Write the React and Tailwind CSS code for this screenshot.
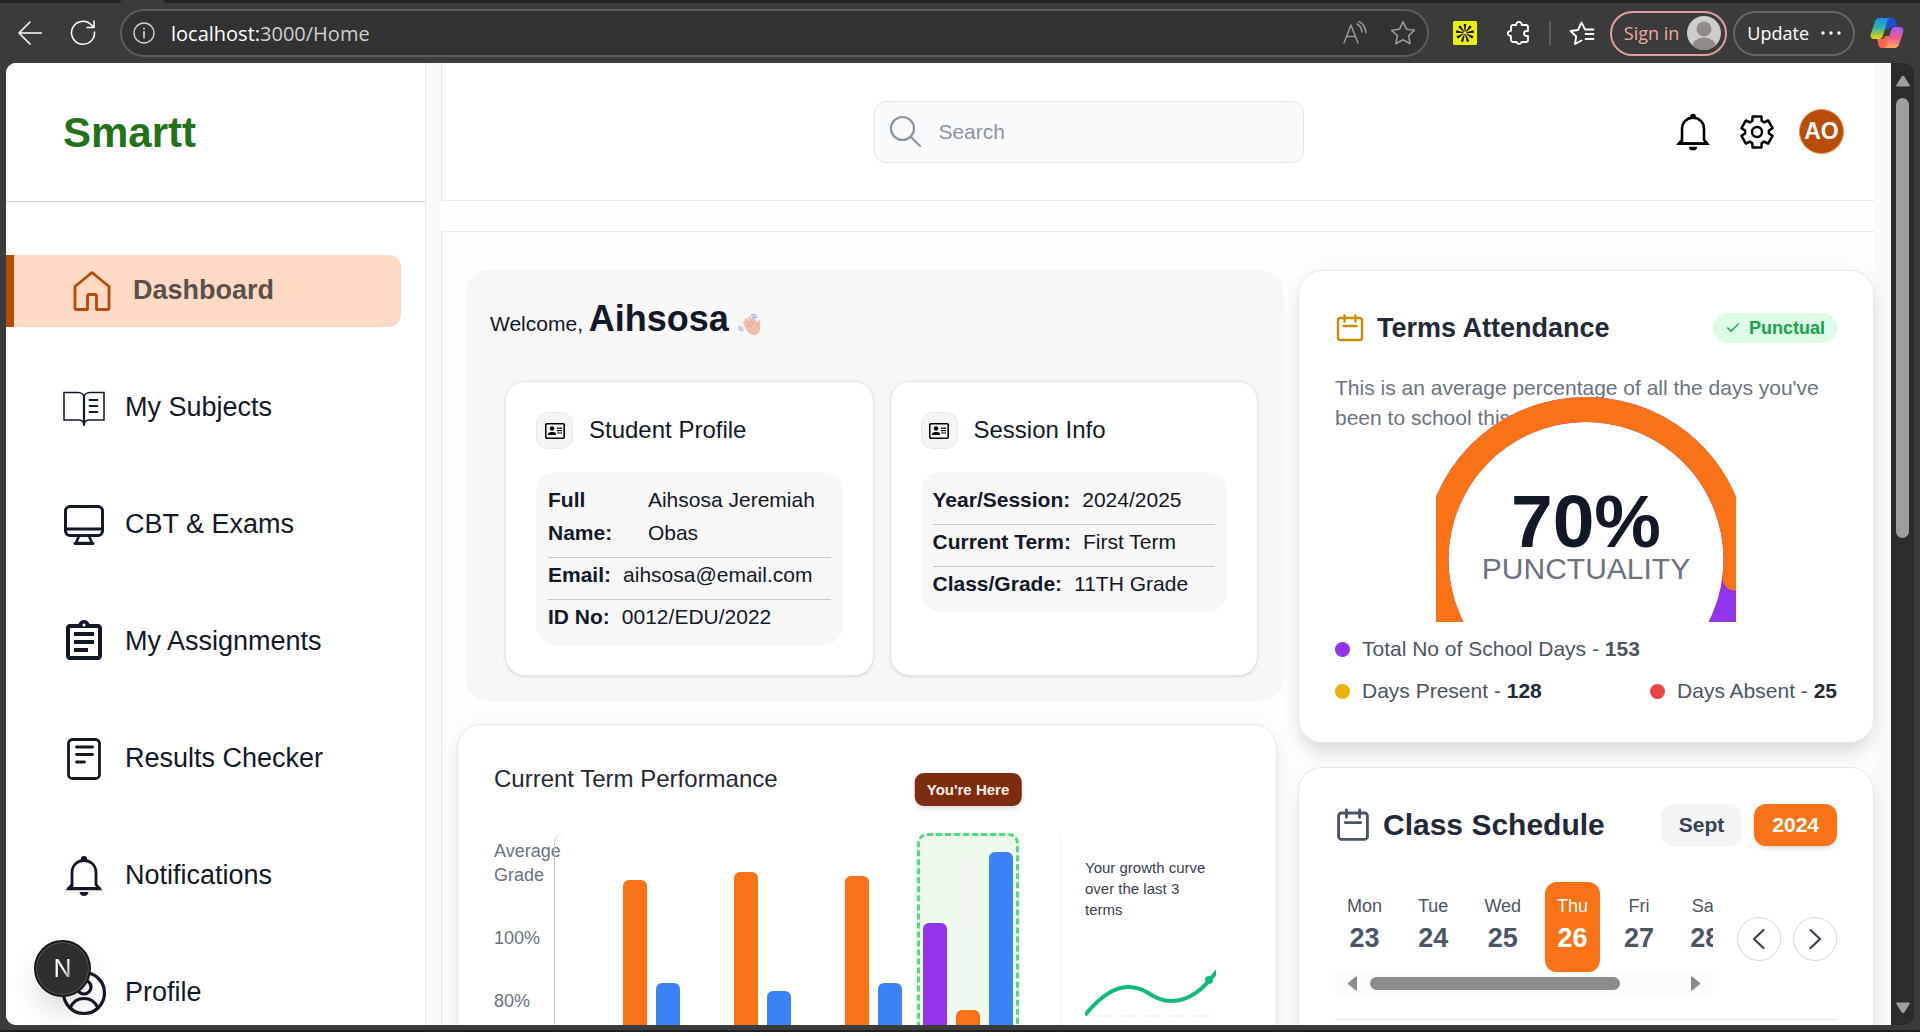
import React from "react";
import { Check } from "lucide-react";

/* ---------- icons ---------- */

const stroke = { fill: "none", stroke: "currentColor", strokeLinecap: "round", strokeLinejoin: "round" };

function HomeIcon() {
  return (
    <svg viewBox="0 0 48 48" className="size-12" {...stroke} strokeWidth="2.8">
      <path d="M24 5.500L41 19.500V41a1.500 1.500 0 0 1-1.500 1.500H28.500V29a1.500 1.500 0 0 0-1.500-1.500h-6a1.500 1.500 0 0 0-1.500 1.500v13.500H8.500A1.500 1.500 0 0 1 7 41V19.500z" />
    </svg>
  );
}

function BookIcon() {
  return (
    <svg viewBox="0 0 48 48" className="size-12" {...stroke} strokeWidth="1.5" strokeLinejoin="miter">
      <path d="M4 8.500h14c3.500 0 6 2 6 5c0-3 2.500-5 6-5h14V36H30c-3.500 0-6 1-6 5c0-4-2.500-5-6-5H4z" />
      <path d="M24 13V41" strokeWidth="2.2" />
      <path d="M29.500 16h8M29.500 22h8M29.500 28h8" strokeWidth="1.800" />
    </svg>
  );
}

function MonitorIcon() {
  return (
    <svg viewBox="0 0 48 48" className="size-12" {...stroke} strokeWidth="3">
      <rect x="5.500" y="5.500" width="37" height="29" rx="4.500" />
      <path d="M6 28h36" strokeWidth="3" />
      <path d="M19 35l-3 7h16L29 35" strokeWidth="2.6" />
      <path d="M15 42.500h18" strokeWidth="2.8" />
    </svg>
  );
}

function AssignmentIcon() {
  return (
    <svg viewBox="0 0 24 24" className="size-12" fill="currentColor">
      <path d="M7 15h7v2H7zm0-4h10v2H7zm0-4h10v2H7zm12-4h-4.180C14.400 1.840 13.300 1 12 1s-2.400.84-2.820 2H5c-.14 0-.27.010-.4.040a2.008 2.008 0 0 0-1.440 1.190c-.1.230-.16.490-.16.770v14c0 .27.060.54.160.78s.25.450.43.640c.27.270.62.470 1.010.550.130.020.260.030.400.030h14c1.100 0 2-.9 2-2V5c0-1.100-.9-2-2-2m-7-.25c.41 0 .75.340.75.750s-.34.750-.75.750-.75-.34-.75-.75.340-.75.750-.75M19 19H5V5h14z" />
    </svg>
  );
}

function ReportIcon() {
  return (
    <svg viewBox="0 0 48 48" className="size-12" {...stroke} strokeWidth="2.8">
      <rect x="8.500" y="4.500" width="31" height="39" rx="4" />
      <path d="M16.500 12h16M16.500 19.500h16M16.500 27h8" strokeWidth="2.8" />
    </svg>
  );
}

function BellIcon({ className = "size-12" }) {
  return (
    <svg viewBox="0 0 48 48" className={className} {...stroke} strokeWidth="2.8">
      <path d="M12 35V20.500C12 13.500 17.200 8.500 24 8.500s12 5 12 12V32.500l3.500 4.300H8.500L12 32.500" strokeLinejoin="miter" strokeLinecap="butt" />
      <path d="M7.500 36.500h33" strokeWidth="2.800" strokeLinecap="butt" />
      <path d="M20.800 9V7.200a3.200 3.200 0 0 1 6.400 0V9z" fill="currentColor" stroke="none" />
      <path d="M19.500 40h9a4.500 4 0 0 1-9 0z" fill="currentColor" stroke="none" />
    </svg>
  );
}

function UserIcon() {
  return (
    <svg viewBox="0 0 48 48" className="size-12" {...stroke} strokeWidth="3.2">
      <circle cx="24" cy="24" r="20.500" />
      <circle cx="24" cy="18" r="7" />
      <path d="M10.500 38.500C13 32.500 18 29.500 24 29.500s11 3 13.500 9" />
    </svg>
  );
}

function GearIcon() {
  const pts = [];
  for (let k = 0; k < 6; k++) {
    const base = -90 + k * 60;
    for (const [da, r] of [[-23, 12], [-16, 16], [16, 16], [23, 12]]) {
      const a = ((base + da) * Math.PI) / 180;
      pts.push(`${(18 + r * Math.cos(a)).toFixed(2)},${(18 + r * Math.sin(a)).toFixed(2)}`);
    }
  }
  return (
    <svg viewBox="0 0 36 36" className="size-9" {...stroke} strokeWidth="2.5">
      <polygon points={pts.join(" ")} />
      <circle cx="18" cy="18" r="5" />
    </svg>
  );
}

function SearchIcon() {
  return (
    <svg viewBox="0 0 36 36" className="size-9 shrink-0 text-[#8b93a3]" {...stroke} strokeWidth="2.2">
      <circle cx="14.500" cy="14.500" r="11.500" />
      <path d="M23 23l9 9" />
    </svg>
  );
}

function CalendarIcon({ className }) {
  return (
    <svg viewBox="0 0 30 30" className={className} {...stroke} strokeWidth="2.4">
      <rect x="3" y="5" width="24" height="22" rx="2.500" />
      <path d="M9.500 2.500v6M20.500 2.500v6M8.500 13h13" />
    </svg>
  );
}

function IdCardIcon() {
  return (
    <svg viewBox="0 0 20 16" className="h-4 w-5" fill="currentColor">
      <rect x="0.800" y="0.800" width="18.400" height="14.400" rx="1" fill="#fff" stroke="currentColor" strokeWidth="1.600" />
      <circle cx="7" cy="5.500" r="2.200" />
      <path d="M3 12v-1c0-1.500 2-2 4-2s4 .5 4 2v1z" />
      <path d="M12 4.500h5v1.300h-5zM12 7h5v1.300h-5zM12 9.500h5v1h-5z" />
    </svg>
  );
}

function WaveIcon() {
  return (
    <svg viewBox="0 0 24 24" className="ml-[9px] inline-block size-6">
      <g fill="none" stroke="#eebda6" strokeLinecap="round">
        <path d="M11 14L6.500 9.500M12.500 11.500L8 6.800M15 10L11.500 5.200M17.500 10.500L15.500 5.800" strokeWidth="3" />
        <path d="M20.500 13.500L20.800 8.500" strokeWidth="2.6" />
      </g>
      <path d="M6 12.500l7-5 6 1 3 4c1 5-1.500 9-5.500 9.500-4 .3-7.500-3.500-10.500-9.500z" fill="#eebda6" />
      <path d="M9.500 9.500l3.500 3.500M12.500 8l2.800 3.500" stroke="#dd9f86" strokeWidth=".7" fill="none" />
      <g fill="none" stroke="#8fb1f5" strokeWidth="1.200" strokeLinecap="round">
        <path d="M13 2.800c1.800-2 5-1 5.600 1.700M14.500 4.500c1-1 2.200-.6 2.600.6" />
        <path d="M1.500 13.500c-1.300 2 .3 4.500 2.800 4.500M3.500 14c-.5 1.200.2 2.200 1.500 2.300" />
      </g>
    </svg>
  );
}

/* ---------- browser frame ---------- */

function CopilotLogo() {
  return (
    <svg viewBox="0 0 34 32" className="h-8 w-[34px]">
      <defs>
        <linearGradient id="cpA" x1="0" y1="0" x2="0" y2="1">
          <stop offset="0" stopColor="#1a8df0" />
          <stop offset=".45" stopColor="#2fb3a8" />
          <stop offset="1" stopColor="#f4d80a" />
        </linearGradient>
        <linearGradient id="cpB" x1="0" y1="0" x2="0" y2="1">
          <stop offset="0" stopColor="#a05cf5" />
          <stop offset=".5" stopColor="#ef5a92" />
          <stop offset="1" stopColor="#ffae57" />
        </linearGradient>
      </defs>
      <path d="M9.500 1h13c1.600 0 2.400 1 2.800 2.400L27 9.500h-4.500c-2 0-3 1-3.600 3l-5 0L16 3z" fill="#1b4fd8" />
      <path d="M24.500 31h-13c-1.600 0-2.400-1-2.800-2.400L7 22h4.500c2 0 3-1 3.600-3h5L18 29z" fill="#f4694a" />
      <path d="M9.500 1H20c-1.500.3-2.300 1.500-2.800 3.200L13 18.500C12.200 21 11 22 9 22H4.500C1.500 22 0 20 .8 17L5 4.500C5.800 2.200 7.300 1 9.500 1z" fill="url(#cpA)" />
      <path d="M24.500 31H14c1.500-.3 2.300-1.500 2.800-3.200L21 13.500c.8-2.500 2-3.500 4-3.500h4.500c3 0 4.500 2 3.700 5L29 27.500c-.8 2.300-2.300 3.500-4.500 3.500z" fill="url(#cpB)" />
    </svg>
  );
}

function StarburstLogo() {
  const rays = [0, 40, 80, 120, 160, 200, 240, 280, 320];
  return (
    <svg viewBox="0 0 24 24" className="size-6">
      <rect width="24" height="24" rx="1.500" fill="#eaf20a" />
      {rays.map((r) => (
        <path key={r} d="M11.600 10.500l-.9-7.500h2.600l-.9 7.500z" fill="#111" transform={`rotate(${r} 12 12)`} />
      ))}
    </svg>
  );
}

function Toolbar() {
  return (
    <header className="flex h-[60px] shrink-0 items-center bg-[#3b3b3b] pr-4 pl-[18px] font-['Open_Sans',sans-serif] text-white">
      <button aria-label="Back" className="mr-7">
        <svg viewBox="0 0 24 24" className="size-6" {...stroke} strokeWidth="1.500">
          <path d="M23.500 12H1M12 1L1 12l11 11" />
        </svg>
      </button>
      <button aria-label="Refresh" className="mr-[24px]">
        <svg viewBox="0 0 26 26" className="size-[26px]" {...stroke} strokeWidth="1.500">
          <path d="M24.500 12a11.500 11.500 0 1 1-3.500-7.500L24 7.500M24 1v6.500h-7" />
        </svg>
      </button>
      <div className="flex h-12 min-w-0 flex-1 items-center rounded-full border-2 border-[#5c5c5c] bg-[#323232] px-[11px]">
        <svg viewBox="0 0 22 22" className="size-[22px] shrink-0 text-[#d0d0d0]" {...stroke} strokeWidth="1.400">
          <circle cx="11" cy="11" r="10" />
          <path d="M11 10v5.500M11 6.500v.2" strokeWidth="1.800" />
        </svg>
        <p className="ml-4 flex-1 truncate pt-[2px] text-[20px]/[30px]">
          localhost:<span className="text-[#cfcfcf]">3000/Home</span>
        </p>
        <button aria-label="Read aloud" className="mr-[22px] text-[#999]">
          <svg viewBox="0 0 26 24" className="h-6 w-[26px]" {...stroke} strokeWidth="1.500">
            <path d="M2 22L9 4l7 18M4.500 15.500h9M15 3c3 1.500 4.500 4 5 8M17 .8c4.500 2 6.500 5.500 7 11" />
          </svg>
        </button>
        <button aria-label="Add to favorites" className="text-[#999]">
          <svg viewBox="0 0 26 26" className="size-[26px]" {...stroke} strokeWidth="1.600">
            <path d="M13 1.800l3.500 7.400 8 1-5.900 5.600 1.500 8-7.100-4-7.100 4 1.500-8L1.500 10.200l8-1z" />
          </svg>
        </button>
      </div>
      <button aria-label="Extension" className="ml-6">
        <StarburstLogo />
      </button>
      <button aria-label="Extensions" className="ml-[30px]">
        <svg viewBox="0 0 24 24" className="size-6" {...stroke} strokeWidth="1.800">
          <path d="M4 6a2 2 0 0 1 2-2h3.300V3.600a2.700 2.700 0 0 1 5.400 0V4H19a2 2 0 0 1 2 2v4h-1.500a2.300 2.300 0 0 0 0 5H21v4a2 2 0 0 1-2 2h-4.500a2.600 2.600 0 0 1-5 0H6a2 2 0 0 1-2-2v-4h-.5a2.600 2.600 0 0 1 0-5.200H4z" />
        </svg>
      </button>
      <span className="mx-[18px] h-6 w-[2px] bg-[#5e5e5e]" />
      <button aria-label="Favorites">
        <svg viewBox="0 0 26 24" className="h-6 w-[26px]" {...stroke} strokeWidth="1.800">
          <path d="M12.500 19.500L6 23l1.200-7.500L1.500 10l7.500-1 3.500-7.500L16 8.500h8.500M16.500 13h8M16.500 18h8" />
        </svg>
      </button>
      <button className="ml-[15px] flex h-[45px] items-center gap-2 rounded-full border-2 border-[#e09f9b] pr-1 pl-3 text-[18px] text-[#f0a8a4]">
        Sign in
        <svg viewBox="0 0 34 34" className="size-[34px]">
          <defs>
            <clipPath id="avatar"><circle cx="17" cy="17" r="17" /></clipPath>
          </defs>
          <g clipPath="url(#avatar)">
            <rect width="34" height="34" fill="#cfcdc9" />
            <circle cx="17" cy="13" r="7.500" fill="#8f8c88" />
            <ellipse cx="17" cy="31" rx="12" ry="9.500" fill="#8f8c88" />
          </g>
        </svg>
      </button>
      <button className="mr-[7px] ml-[6px] flex h-[45px] items-center gap-3 rounded-full border-2 border-[#666] px-3 text-[18px]">
        Update
        <svg viewBox="0 0 20 4" className="h-1 w-5" fill="currentColor">
          <circle cx="2" cy="2" r="1.700" />
          <circle cx="10" cy="2" r="1.700" />
          <circle cx="18" cy="2" r="1.700" />
        </svg>
      </button>
      <button aria-label="Copilot" className="ml-2">
        <CopilotLogo />
      </button>
    </header>
  );
}

function PageScrollbar() {
  return (
    <div className="flex w-[23px] shrink-0 flex-col items-center rounded-r-[10px] bg-[#2c2c2c] pt-3 pb-[11px] text-[#9e9e9e]">
      <svg viewBox="0 0 14 12" className="h-3 w-[14px]" fill="currentColor">
        <path d="M7 .8c.6 0 1 .3 1.300.8l5.300 8.400c.4.800 0 1.500-.8 1.500H1.200c-.8 0-1.200-.7-.8-1.500L5.700 1.600C6 1.100 6.400.8 7 .8z" />
      </svg>
      <div className="mt-[11px] h-[440px] w-[13px] rounded-full bg-[#9e9e9e]" />
      <svg viewBox="0 0 14 12" className="mt-auto h-3 w-[14px] rotate-180" fill="currentColor">
        <path d="M7 .8c.6 0 1 .3 1.300.8l5.300 8.400c.4.800 0 1.500-.8 1.500H1.200c-.8 0-1.200-.7-.8-1.500L5.700 1.600C6 1.100 6.400.8 7 .8z" />
      </svg>
    </div>
  );
}

/* ---------- sidebar ---------- */

const navItems = [
  { label: "My Subjects", Icon: BookIcon },
  { label: "CBT & Exams", Icon: MonitorIcon },
  { label: "My Assignments", Icon: AssignmentIcon },
  { label: "Results Checker", Icon: ReportIcon },
  { label: "Notifications", Icon: BellIcon },
  { label: "Profile", Icon: UserIcon },
];

function Sidebar() {
  return (
    <aside className="w-[420px] shrink-0 border-r border-[#e5e7eb] bg-white">
      <div className="flex h-[139px] items-center border-b border-[#cfd2dc] pt-[2px] pl-[57px]">
        <span className="text-[42px]/[48px] font-bold text-[#217317]">Smartt</span>
      </div>
      <nav className="flex flex-col gap-[45px] pt-[53px] text-[27px]/[36px] text-[#111827]">
        <a href="#dashboard" className="mr-6 flex h-[72px] items-center gap-[17px] rounded-r-xl border-l-8 border-[#b84a08] bg-[#fedac4] pl-[54px] font-bold text-[#5b5049]">
          <span className="text-[#b84a08]"><HomeIcon /></span>
          <span className="pb-[2px]">Dashboard</span>
        </a>
        {navItems.map(({ label, Icon }) => (
          <a key={label} href={`#${label}`} className="flex h-[72px] items-center gap-[17px] pl-[54px]">
            <Icon />
            <span className="pb-[2px]">{label}</span>
          </a>
        ))}
      </nav>
    </aside>
  );
}

/* ---------- main column ---------- */

function TopBar() {
  return (
    <div className="grid h-[138px] grid-cols-[432fr_430px_569fr] items-center border-b border-l border-[#e5e7eb] bg-white">
      <span />
      <label className="flex h-[62px] items-center gap-[14px] rounded-xl border border-[#e2e5ec] bg-[#f9fafb] px-[13px]">
        <SearchIcon />
        <input type="text" aria-label="Search" placeholder="Search" className="w-full bg-transparent text-[21px]/[30px] text-[#374151] outline-none placeholder:text-[#8b93a3]" />
      </label>
      <div className="flex items-center justify-end gap-6 pr-[30px] text-black">
        <button aria-label="Notifications"><BellIcon className="size-11" /></button>
        <button aria-label="Settings"><GearIcon /></button>
        <button className="size-[45px] rounded-full border border-[#f08a45] bg-[#b84d06] text-[23px] font-bold text-white">AO</button>
      </div>
    </div>
  );
}

function InfoCard({ title, rows }) {
  return (
    <section className="min-w-0 rounded-[20px] border border-[#e5e7eb] bg-white px-[30px] pt-[30px] pb-[30px] shadow-sm">
      <div className="mb-[23px] flex items-center gap-4">
        <span className="flex size-[37px] items-center justify-center rounded-xl border border-[#e5e7eb] bg-[#f5f5f5] text-black">
          <IdCardIcon />
        </span>
        <h2 className="pb-[2px] text-[24px]/[30px] text-[#111827]">{title}</h2>
      </div>
      <dl className="rounded-[20px] bg-[#f7f7f7] px-3 pt-[11px] pb-3 text-[21px]/[33px] text-[#111827]">
        {rows.map(([k, v], i) => (
          <div key={k} className={i < rows.length - 1 ? "flex gap-3 border-b border-[#c8c8c8] pb-2" : "flex gap-3"}>
            <dt className="font-bold">{k}</dt>
            <dd>{v}</dd>
          </div>
        ))}
      </dl>
    </section>
  );
}

function Welcome() {
  return (
    <section className="mr-[-7px] ml-2 rounded-[24px] bg-[#f7f7f7] pt-[25px] pb-[25px]">
      <h1 className="mb-[33px] pl-[25px] text-[21px]/[48px] text-[#111827]">
        Welcome, <span className="text-[36px]/[48px] font-bold">Aihsosa</span>
        <WaveIcon />
      </h1>
      <div className="grid grid-cols-2 gap-4 pr-[26px] pl-10">
        <InfoCard
          title="Student Profile"
          rows={[["Full Name:", "Aihsosa Jeremiah Obas"], ["Email:", "aihsosa@email.com"], ["ID No:", "0012/EDU/2022"]]}
        />
        <InfoCard
          title="Session Info"
          rows={[["Year/Session:", "2024/2025"], ["Current Term:", "First Term"], ["Class/Grade:", "11TH Grade"]]}
        />
      </div>
    </section>
  );
}

const groups = [
  { purple: 200, orange: 373, blue: 270 },
  { purple: 190, orange: 381, blue: 262 },
  { purple: 205, orange: 377, blue: 270 },
  { purple: 330, orange: 243, blue: 401, current: true },
];

function Performance() {
  return (
    <section className="mt-[23px] rounded-[24px] border border-[#e5e7eb] bg-white px-9 pt-9 pb-9 shadow-[0_12px_19px_-4px_rgba(0,0,0,0.1),0_0_24px_rgba(0,0,0,0.04)]">
      <h2 className="text-[24px]/[36px] text-[#1f2937]">Current Term Performance</h2>
      <div className="mt-9 flex h-[420px]">
        <div className="flex w-[60px] shrink-0 flex-col gap-[39px] pt-[6px] text-[18px]/[24px] text-[#6b7280]">
          <span>Average Grade</span>
          <span>100%</span>
          <span>80%</span>
          <span>60%</span>
          <span>40%</span>
          <span>20%</span>
        </div>
        <div className="flex flex-1 items-end gap-[21px] rounded-tl-[10px] border-l border-[#c8c8c8] pl-[35px]">
          {groups.map((g, i) => (
            <div key={i} className="relative flex h-full items-end gap-[9px]">
              {g.current && (
                <>
                  <span className="absolute inset-y-0 -inset-x-[6px] rounded-[10px] border-[3px] border-dashed border-[#4ade80] bg-[#eff8ed]" />
                  <span className="absolute -top-[60px] left-1/2 -translate-x-1/2 rounded-[9px] bg-[#7c2d0e] px-3 text-[15px]/[33px] font-bold whitespace-nowrap text-[#fdf0e8] shadow-md">
                    You're Here
                  </span>
                </>
              )}
              <span className="relative w-6 rounded-t-md bg-[#9333ea]" style={{ height: g.purple }} />
              <span className="relative w-6 rounded-t-md bg-[#f97316]" style={{ height: g.orange }} />
              <span className="relative w-6 rounded-t-md bg-[#3b82f6]" style={{ height: g.blue }} />
            </div>
          ))}
        </div>
        <div className="w-[180px] shrink-0 border-l border-[#f0f1f3] pt-6 pl-6">
          <p className="w-[131px] text-[15px]/[21px] text-[#374151]">Your growth curve over the last 3 terms</p>
          <svg viewBox="0 0 131 52" className="mt-12 h-[52px] w-[131px]">
            <path d="M5 48H128" stroke="#f0f1f3" strokeWidth="2" strokeDasharray="3 3" fill="none" />
            <path d="M0 47C14 30 28 19 43 19C62 19 68 33 86 33C104 33 118 22 132 3" stroke="#10b981" strokeWidth="4" fill="none" />
            <circle cx="124" cy="12" r="4" fill="#10b981" />
          </svg>
        </div>
      </div>
    </section>
  );
}

/* ---------- right column ---------- */

function Dot({ className }) {
  return <span className={`size-[15px] shrink-0 rounded-full ${className}`} />;
}

function Attendance() {
  return (
    <section className="rounded-[24px] border border-[#e5e7eb] bg-white px-9 pt-[42px] pb-9 shadow-[0_12px_19px_-4px_rgba(0,0,0,0.14),0_0_24px_rgba(0,0,0,0.04)]">
      <div className="flex h-[30px] items-center">
        <CalendarIcon className="size-[30px] text-[#ca8a04]" />
        <h2 className="ml-3 flex-1 text-[27px]/[30px] font-bold text-[#1f2937]">Terms Attendance</h2>
        <span className="flex h-[30px] items-center gap-2 rounded-full bg-[#dcfce7] px-3 text-[18px]/[30px] font-bold text-[#16a34a]">
          <Check size={16} strokeWidth={2} />
          Punctual
        </span>
      </div>
      <p className="mt-[30px] text-[21px]/[30px] text-[#6b7280]">
        This is an average percentage of all the days you've been to school this term
      </p>
      <div className="relative mx-auto -mt-9 h-[225px] w-[300px]">
        <svg viewBox="0 0 300 225" className="size-full" fill="none" strokeWidth="25">
          <path d="M43.930 268.570A150 150 0 1 1 256.070 268.570" stroke="#9333ea" />
          <path d="M43.930 268.570A150 150 0 1 1 298.880 181" stroke="#f97316" strokeLinecap="round" />
        </svg>
        <div className="absolute inset-0 flex flex-col items-center pt-[88px] text-center">
          <span className="text-[75px]/[72px] font-bold text-[#111827]">70%</span>
          <span className="-mt-[6px] text-[30px]/[36px] text-[#6b7280]">PUNCTUALITY</span>
        </div>
      </div>
      <div className="mt-3 grid gap-3 text-[21px]/[30px] text-[#4b5563]">
        <p className="flex items-center gap-3">
          <Dot className="bg-[#9333ea]" />
          <span>Total No of School Days - <b>153</b></span>
        </p>
        <div className="flex justify-between">
          <p className="flex items-center gap-3">
            <Dot className="bg-[#eab308]" />
            <span>Days Present - <b className="text-[#1f2937]">128</b></span>
          </p>
          <p className="flex items-center gap-3">
            <Dot className="bg-[#ef4444]" />
            <span>Days Absent - <b className="text-[#1f2937]">25</b></span>
          </p>
        </div>
      </div>
    </section>
  );
}

const days = [["Mon", 23], ["Tue", 24], ["Wed", 25], ["Thu", 26], ["Fri", 27], ["Sat", 28], ["Sun", 29], ["Mon", 30]];

function Schedule() {
  return (
    <section className="mt-6 h-[600px] rounded-[24px] border border-[#e5e7eb] bg-white px-9 pt-9 shadow-[0_12px_19px_-4px_rgba(0,0,0,0.1),0_0_24px_rgba(0,0,0,0.04)]">
      <div className="flex h-[42px] items-center">
        <CalendarIcon className="size-9 text-[#4b5563]" />
        <h2 className="ml-3 flex-1 text-[30px]/[36px] font-bold text-[#1f2937]">Class Schedule</h2>
        <button className="h-[42px] rounded-xl bg-[#f3f4f6] px-[18px] text-[21px]/[30px] font-bold text-[#374151]">Sept</button>
        <button className="ml-3 h-[42px] rounded-xl bg-[#f97316] px-[18px] text-[21px]/[30px] font-bold text-white shadow-md">2024</button>
      </div>
      <div className="mt-9 flex items-center gap-3">
        <div className="mr-3 min-w-0 flex-1">
          <div className="flex gap-3 overflow-hidden">
            {days.map(([d, n]) => (
              <button
                key={n}
                className={
                  n === 26
                    ? "flex shrink-0 flex-col items-center rounded-xl bg-[#f97316] px-3 pt-3 pb-4 text-white shadow-sm"
                    : "flex shrink-0 flex-col items-center rounded-xl px-3 pt-3 pb-4 text-[#4b5563]"
                }
              >
                <span className="text-[18px]/[24px]">{d}</span>
                <span className="mt-[2px] text-[27px]/[36px] font-bold">{n}</span>
              </button>
            ))}
          </div>
          <div className="flex h-[23px] items-center bg-[#fbfbfb] px-3 text-[#8b8b8b]">
            <svg viewBox="0 0 11 18" className="h-[15px] w-[11px]" fill="currentColor">
              <path d="M9 1c1-.8 2-.3 2 1v14c0 1.300-1 1.800-2 1L.8 10.200c-.8-.7-.8-1.700 0-2.400z" />
            </svg>
            <div className="ml-3 h-[13px] w-[250px] rounded-full bg-[#8b8b8b]" />
            <svg viewBox="0 0 11 18" className="ml-auto h-[15px] w-[11px] rotate-180" fill="currentColor">
              <path d="M9 1c1-.8 2-.3 2 1v14c0 1.300-1 1.800-2 1L.8 10.200c-.8-.7-.8-1.700 0-2.400z" />
            </svg>
          </div>
        </div>
        <button aria-label="Previous days" className="flex size-11 items-center justify-center rounded-full border border-[#d1d5db] text-[#374151]">
          <svg viewBox="0 0 24 24" className="size-6" {...stroke} strokeWidth="2.2"><path d="M16.500 3L7 12l9.500 9" /></svg>
        </button>
        <button aria-label="Next days" className="flex size-11 items-center justify-center rounded-full border border-[#d1d5db] text-[#374151]">
          <svg viewBox="0 0 24 24" className="size-6" {...stroke} strokeWidth="2.2"><path d="M7.500 3L17 12l-9.500 9" /></svg>
        </button>
      </div>
      <hr className="mt-6 border-[#e5e7eb]" />
    </section>
  );
}

export default function App() {
  return (
    <div className="flex h-screen flex-col overflow-hidden bg-[#3b3b3b] font-['Liberation_Sans',Arial,sans-serif]">
      <div className="flex h-[3px] shrink-0 bg-[#202020]">
        <span className="ml-[120px] w-[45px] rounded-t-sm bg-[#3b3b3b]" />
      </div>
      <Toolbar />
      <div className="flex min-h-0 flex-1 px-[6px]">
        <div className="relative flex min-w-0 flex-1 overflow-hidden rounded-l-[10px] bg-[#f9fafb]">
          <Sidebar />
          <main className="mr-[17px] ml-[15px] min-w-0 flex-1 bg-[#fefefe]">
            <TopBar />
            <div className="mt-[30px] grid grid-cols-[820fr_576fr] items-start gap-[21px] border-t border-l border-[#e5e7eb] bg-[#fefefe] pt-[38px] pl-[15px]">
              <div className="min-w-0">
                <Welcome />
                <Performance />
              </div>
              <div className="min-w-0">
                <Attendance />
                <Schedule />
              </div>
            </div>
          </main>
          <button aria-label="Open developer tools" className="absolute bottom-7 left-7 flex size-[57px] items-center justify-center rounded-full border-2 border-[#191919] bg-[#2d2f2e] font-['Inter',sans-serif] text-[24px] text-white shadow-[0_0_0_1px_#555_inset,0_16px_32px_-8px_rgba(0,0,0,0.24)]">
            <span className="bg-linear-to-br from-white from-50% to-[#666] bg-clip-text text-transparent">N</span>
          </button>
        </div>
        <PageScrollbar />
      </div>
      <div className="mt-[5px] h-[2px] shrink-0 bg-[#202020]" />
    </div>
  );
}
